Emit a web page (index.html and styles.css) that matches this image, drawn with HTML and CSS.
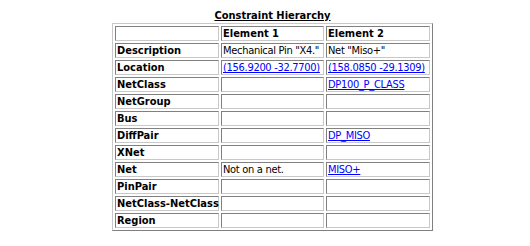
FILE: index.html
```html
<!DOCTYPE html>
<html>
<head>
<meta charset="utf-8">
<link rel="stylesheet" href="styles.css">
</head>
<body>
<div class="wrap">
  <h1 class="title">Constraint Hierarchy</h1>
  <table class="grid">
    <colgroup><col class="c1"><col class="c2"><col class="c3"></colgroup>
    <tr><th></th><th>Element 1</th><th>Element 2</th></tr>
    <tr><th>Description</th><td>Mechanical Pin "X4."</td><td>Net "Miso+"</td></tr>
    <tr><th>Location</th><td><a href="#">(156.9200 -32.7700)</a></td><td><a href="#">(158.0850 -29.1309)</a></td></tr>
    <tr><th>NetClass</th><td></td><td><a href="#">DP100_P_CLASS</a></td></tr>
    <tr><th>NetGroup</th><td></td><td></td></tr>
    <tr><th>Bus</th><td></td><td></td></tr>
    <tr><th>DiffPair</th><td></td><td><a href="#">DP_MISO</a></td></tr>
    <tr><th>XNet</th><td></td><td></td></tr>
    <tr><th>Net</th><td>Not on a net.</td><td><a href="#">MISO+</a></td></tr>
    <tr><th>PinPair</th><td></td><td></td></tr>
    <tr><th>NetClass-NetClass</th><td></td><td></td></tr>
    <tr><th>Region</th><td></td><td></td></tr>
  </table>
</div>
</body>
</html>
```
FILE: styles.css
```css
html, body { margin: 0; padding: 0; background: #fff; }
body {
  font-family: "DejaVu Sans Condensed", "Liberation Sans", sans-serif;
  font-size: 11px;
  color: #000;
}
.wrap {
  width: 321px;
  margin-left: 112px;
  padding-top: 9px;
  display: flex;
  flex-direction: column;
  align-items: center;
}
.title {
  margin: 0;
  font-size: 11px;
  font-weight: bold;
  text-decoration: underline;
  line-height: 14px;
}
.grid {
  border-collapse: separate;
  border-spacing: 2px;
  border: 1px solid;
  border-color: #c8c8c8 #808080 #808080 #c8c8c8;
  table-layout: fixed;
  width: 321px;
}
.c1 { width: 104px; }
.c2 { width: 103px; }
.c3 { width: 104px; }
.grid th, .grid td {
  border: 1px solid;
  border-color: #808080 #c8c8c8 #c8c8c8 #808080;
  padding: 0 1px;
  height: 13px;
  line-height: 13px;
  text-align: left;
  white-space: nowrap;
  vertical-align: middle;
}
.grid th { font-weight: bold; }
.grid td { font-weight: normal; letter-spacing: -0.3px; }
.grid a { color: #0000ff; text-decoration: underline; }
```
